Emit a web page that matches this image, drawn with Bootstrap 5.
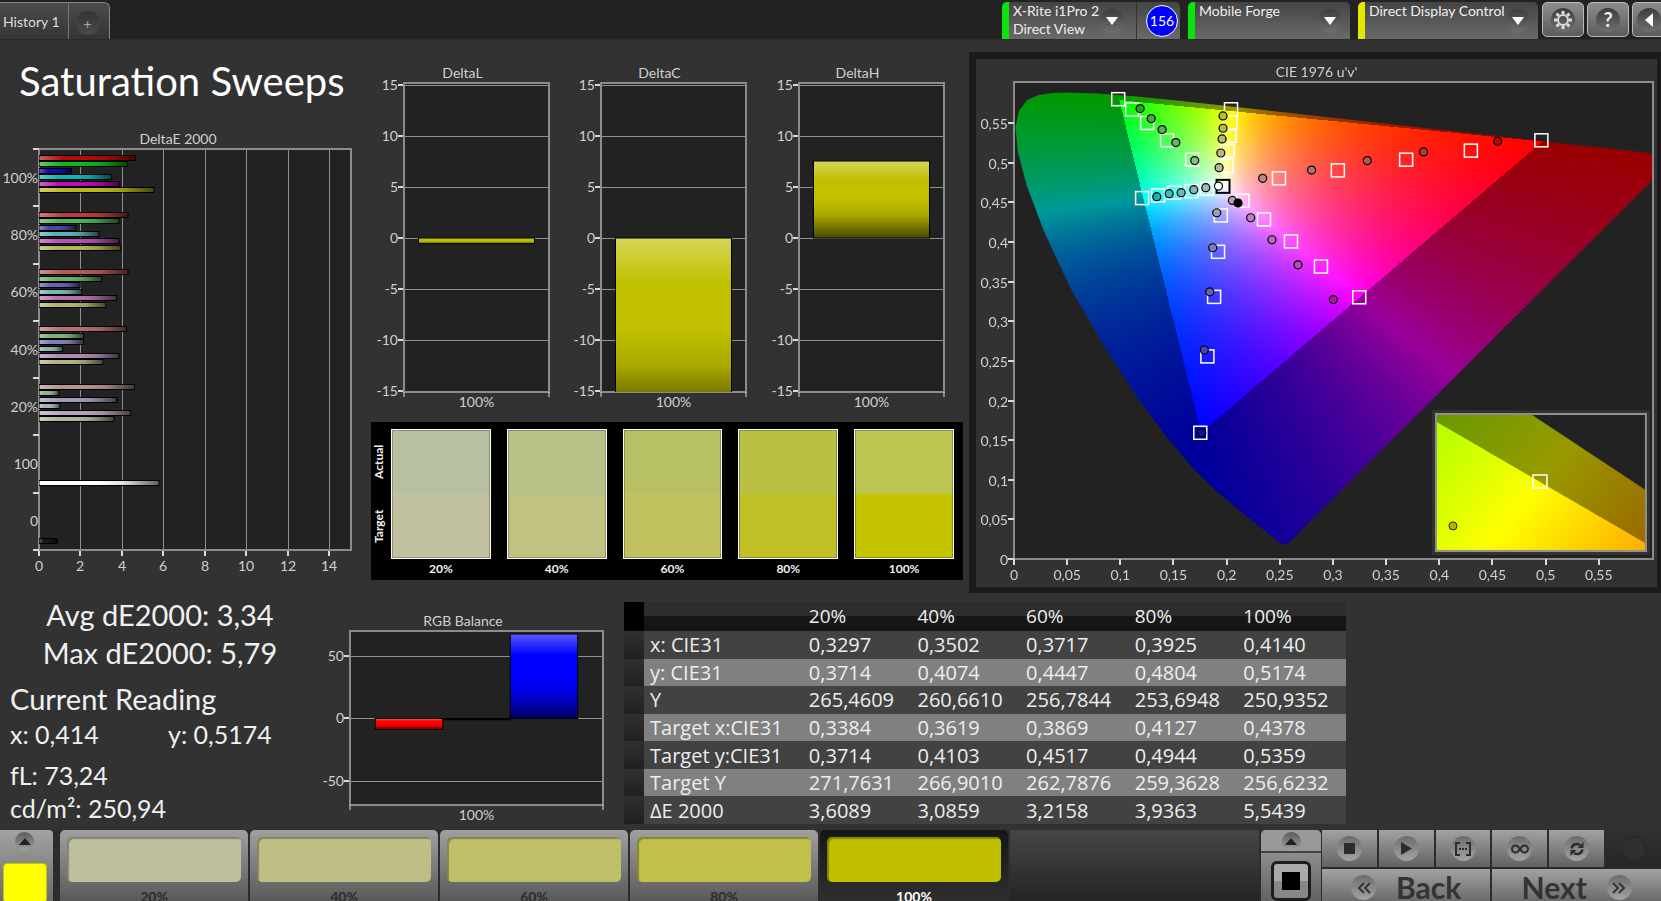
<!DOCTYPE html>
<html lang="en" data-bs-theme="dark">
<head>
<meta charset="utf-8">
<meta name="viewport" content="width=device-width, initial-scale=1">
<title>Saturation Sweeps</title>
<link rel="stylesheet" href="https://cdn.jsdelivr.net/npm/bootstrap@5.3.0/dist/css/bootstrap.min.css">
<style>
  body { background: #323232; color: #f0f0f0; font-family: Lato, "Open Sans", sans-serif; font-size: 14px; line-height: 19px; }
  button { font: inherit; color: inherit; border: 0; padding: 0; }
  svg { display: block; }

  /* top bar */
  .topbar { background: #222; height: 40px; border-bottom: 1px solid #2a2a2a; padding-top: 2px; }
  .history-tab { height: 37px; background: linear-gradient(#4c4c4c, #343434); border: 1px solid #858585; border-width: 1px 1px 0 0; border-radius: 0 6px 0 0; color: #ddd; }
  .history-tab .tab-name { background: none; padding: 0 8px 0 3px; border-right: 1px solid #777; }
  .history-tab .tab-add { width: 24px; height: 24px; margin: 8px 9px 0 7px; border-radius: 50%; background: linear-gradient(#333, #4a4a4a); color: #aaa; }
  .device { height: 37px; background: linear-gradient(#444, #6a6a6a); border-radius: 5px 5px 0 0; border-left: 7px solid #0be40b; overflow: hidden; }
  .device.standby { border-left-color: #e6e600; }
  .device .device-text { padding-left: 4px; white-space: nowrap; line-height: 18px; }
  .knob { width: 24px; height: 24px; border-radius: 50%; background: linear-gradient(#3c3c3c, #707070); display: flex; align-items: center; justify-content: center; flex: none; }
  .device .knob { margin: 7px 8px 0 0; }
  .meter-knob { border-right: 1px solid #333; }
  .meter-knob .knob { margin-right: 12px; }
  .meter-count { width: 32px; height: 32px; margin: 3px 2px 0 9px; border-radius: 50%; background: #00f; border: 1px solid #fff; color: #fff; line-height: 30px; text-align: center; flex: none; }
  .tool { width: 42px; height: 35px; border: 1px solid #bbb; border-radius: 5px; background: linear-gradient(#8c8c8c, #5c5c5c); display: flex; align-items: center; justify-content: center; flex: none; }
  .tool.cut { border-right: 0; border-radius: 5px 0 0 5px; width: 29px; padding-left: 4px; }

  /* work area */
  .upper { display: grid; grid-template-columns: 364fr 605fr 692fr; flex: 556 1 0; min-height: 0; }
  .lower { display: grid; grid-template-columns: 310fr 314fr 722fr 315fr; flex: 234 1 0; min-height: 0; }
  .upper > *, .lower > * { min-width: 0; min-height: 0; }
  .plot { flex: 1 1 0; min-width: 0; min-height: 0; position: relative; }
  .plot svg { width: 100%; height: 100%; position: absolute; left: 0; top: 0; }
  .plot canvas { position: absolute; }
  .plot text { fill: #d0d0d0; font-size: 14px; }
  .delta-row { padding-right: 13px; }
  .sweep-title { font-size: 40px; line-height: 48px; font-weight: 400; padding: 17px 0 22px 19px; margin: 0; white-space: nowrap; }
  .cie-frame { border: 7px solid #1b1b1b; border-right-width: 4px; border-bottom-width: 6px; margin: 12px 0 3px; }
  .cie-inset { position: absolute; right: 7px; bottom: 32px; width: 32%; border: 3px solid #323232; }
  .plot .cie-inset svg { position: static; height: auto; }

  .swatches { background: #000; height: 158px; margin: 0 6px 16px 7px; padding: 7px 9px 0 0; }
  .swatches .side { width: 20px; font-size: 12px; font-weight: 700; line-height: 16px; height: 130px; }
  .swatches .side span { writing-mode: vertical-rl; transform: rotate(180deg); text-align: center; flex: 1; }
  .patch { height: 130px; border: 1px solid #fff; outline: 1px solid rgba(0,0,0,.25); outline-offset: -2px; }
  .patch-name { font-size: 12px; font-weight: 700; line-height: 20px; text-align: center; }

  .big-read { font-size: 29px; line-height: 38px; }
  .mid-read { font-size: 25px; line-height: 33px; }
  .stats { padding-left: 10px; white-space: nowrap; }

  .readings { font-family: "Open Sans", "Noto Sans", sans-serif; font-size: 20px; line-height: 27px; width: 100%; height: 222px; table-layout: fixed; border-collapse: collapse; margin-top: 6px; white-space: nowrap; color: #eee; }
  .readings th, .readings td { padding: 0 0 0 6px; font-weight: 400; }
  .readings thead th { background: linear-gradient(#2d2d2d 48%, #161616 50%); font-weight: 500; font-size: 19px; height: 29px; }
  .readings tbody tr { background: #424242; }
  .readings tbody tr:nth-child(even) { background: #808080; }
  .readings .grip { background: linear-gradient(#303030, #202020); }
  .readings thead .grip { background: #000; }

  /* bottom bar */
  .dock { height: 71px; background: #2c2c2c; flex: none; overflow: hidden; }
  .metal { background: linear-gradient(#a2a2a2, #626262); }
  .dock .mini { width: 19px; height: 19px; border-radius: 50%; background: linear-gradient(#5c5c5c, #a0a0a0); display: flex; align-items: center; justify-content: center; }
  .picker { width: 53px; height: 84px; border-radius: 0 4px 0 0; margin-right: 7px; padding: 2px 4px 0 0; }
  .picker .tint { width: 44px; height: 40px; margin-top: 12px; border-radius: 4px; background: #ff0; border: 1px solid #c4c400; }
  .level { width: 188px; height: 75px; border-radius: 5px 5px 0 0; margin-right: 2px; padding: 7px 7px 0; color: #2c2c2c; font-weight: 700; line-height: 17px; flex: 0 1 auto; background: linear-gradient(#a0a0a0, #555); }
  .level .tint { display: block; height: 45px; border-radius: 5px; margin-bottom: 6px; box-shadow: inset 2px 2px 1px rgba(0,0,0,.3); }
  .level.chosen { background: linear-gradient(#161616, #303030); color: #fff; }
  .shelf { background: linear-gradient(#464646, #242424); }
  .window-col { width: 60px; border-radius: 5px 5px 0 0; margin: 0 1px 0 2px; overflow: hidden; }
  .window-col .up { height: 23px; border-bottom: 2px solid #444; background: #999; }
  .window-col .target-window { width: 40px; height: 40px; margin-top: 8px; border: 3px solid #1c1c1c; border-radius: 6px; background: linear-gradient(#aaa 50%, #888 50%); display: flex; align-items: center; justify-content: center; }
  .transport { width: 339px; display: grid; grid-template-columns: repeat(6, 1fr); gap: 2px; grid-template-rows: 37px 37px; }
  .transport button { display: flex; align-items: center; justify-content: center; }
  .transport .knob { background: linear-gradient(#6c6c6c, #a4a4a4); width: 25px; height: 25px; }
  .transport .idle { background: linear-gradient(#303030, #262626); }
  .transport .idle .knob { background: #2f2f2f; border: 1px solid #262626; }
  .transport .wide { grid-column: span 3; font-size: 30px; font-weight: 700; color: #333; gap: 20px; }
</style>
</head>
<body class="vh-100 overflow-hidden d-flex flex-column">

<header class="topbar d-flex justify-content-between flex-shrink-0">
  <div class="history-tab d-flex">
    <button class="tab-name">History 1</button>
    <button class="tab-add" aria-label="Add history">+</button>
  </div>
  <div class="d-flex">
    <div class="device d-flex me-2" style="width:178px">
      <div class="device-text flex-grow-1">X-Rite i1Pro 2<br>Direct View</div>
      <div class="meter-knob"><button class="knob" aria-label="Meter menu"><svg width="12" height="8"><path d="M0 0h12L6 8z" fill="#fff"/></svg></button></div>
      <div class="meter-count">156</div>
    </div>
    <div class="device d-flex me-2" style="width:162px">
      <div class="device-text flex-grow-1">Mobile Forge</div>
      <button class="knob" aria-label="Source menu"><svg width="12" height="8"><path d="M0 0h12L6 8z" fill="#fff"/></svg></button>
    </div>
    <div class="device standby d-flex me-1" style="width:180px">
      <div class="device-text flex-grow-1">Direct Display Control</div>
      <button class="knob" aria-label="Display menu"><svg width="12" height="8"><path d="M0 0h12L6 8z" fill="#fff"/></svg></button>
    </div>
    <div class="d-flex" style="gap:3px">
      <button class="tool" aria-label="Settings"><span class="knob"><svg width="20" height="20" viewBox="-10 -10 20 20" fill="none" stroke="#ddd"><circle r="5" stroke-width="2"/><g stroke-width="3"><path d="M0-6v-3M0 6v3M6 0h3M-6 0h-3M4.200-4.200l2.200-2.200M-4.200 4.200l-2.200 2.200M4.200 4.200l2.200 2.200M-4.200-4.200l-2.200-2.200"/></g></svg></span></button>
      <button class="tool" aria-label="Help"><span class="knob fw-bold" style="font-size:20px">?</span></button>
      <button class="tool cut" aria-label="Collapse"><span class="knob"><svg width="8" height="14"><path d="M8 0v14L0 7z" fill="#fff"/></svg></span></button>
    </div>
  </div>
</header>

<main class="d-flex flex-column flex-grow-1" style="min-height:0">
  <section class="upper">
    <div class="d-flex flex-column">
      <h1 class="sweep-title">Saturation Sweeps</h1>
      <div class="plot me-2" id="deltaE"></div>
    </div>
    <div class="d-flex flex-column">
      <div class="delta-row d-flex flex-grow-1">
        <div class="plot" id="deltaL"></div>
        <div class="plot" id="deltaC"></div>
        <div class="plot" id="deltaH"></div>
      </div>
      <div class="swatches d-flex">
        <div class="side d-flex flex-column"><span>Actual</span><span>Target</span></div>
        <div class="d-flex flex-grow-1 gap-3" id="patches"></div>
      </div>
    </div>
    <div class="cie-frame d-flex"><div class="plot" id="cie">
      <canvas></canvas>
      <div class="cie-inset">
        <svg viewBox="0 0 212 139">
          <defs>
            <linearGradient id="nearYellow" gradientUnits="userSpaceOnUse" x1="10" y1="-6" x2="200" y2="144">
              <stop offset="0" stop-color="#b0ff00"/><stop offset=".5" stop-color="#ff0"/><stop offset="1" stop-color="#ffb000"/>
            </linearGradient>
          </defs>
          <rect width="212" height="139" fill="#222"/>
          <path d="M0 0H94L212 78V139H0z" fill="url(#nearYellow)"/>
          <path d="M0 0H94L212 78V131L0 8z" fill="#000" opacity=".4"/>
          <rect x="98" y="62" width="14" height="13" fill="none" stroke="#fff" stroke-width="1.500"/>
          <circle cx="18" cy="113" r="4" fill="#b4b400" stroke="#222"/>
          <rect x="1" y="1" width="210" height="137" fill="none" stroke="#909090" stroke-width="2"/>
        </svg>
      </div>
    </div></div>
  </section>

  <section class="lower">
    <div class="stats">
      <div class="text-center">
        <div class="big-read">Avg dE2000: 3,34</div>
        <div class="big-read">Max dE2000: 5,79</div>
      </div>
      <div class="big-read pt-2">Current Reading</div>
      <div class="mid-read d-flex"><span class="w-50">x: 0,414</span><span class="ps-2">y: 0,5174</span></div>
      <div class="mid-read pt-2">fL: 73,24</div>
      <div class="mid-read">cd/m²: 250,94</div>
    </div>
    <div class="d-flex pb-1"><div class="plot me-2" id="rgb"></div></div>
    <div><table class="readings">
      <colgroup><col style="width:20px"><col style="width:22%"><col><col><col><col><col></colgroup>
      <thead><tr><th class="grip"></th><th></th><th>20%</th><th>40%</th><th>60%</th><th>80%</th><th>100%</th></tr></thead>
      <tbody>
        <tr><td class="grip"></td><th>x: CIE31</th><td>0,3297</td><td>0,3502</td><td>0,3717</td><td>0,3925</td><td>0,4140</td></tr>
        <tr><td class="grip"></td><th>y: CIE31</th><td>0,3714</td><td>0,4074</td><td>0,4447</td><td>0,4804</td><td>0,5174</td></tr>
        <tr><td class="grip"></td><th>Y</th><td>265,4609</td><td>260,6610</td><td>256,7844</td><td>253,6948</td><td>250,9352</td></tr>
        <tr><td class="grip"></td><th>Target x:CIE31</th><td>0,3384</td><td>0,3619</td><td>0,3869</td><td>0,4127</td><td>0,4378</td></tr>
        <tr><td class="grip"></td><th>Target y:CIE31</th><td>0,3714</td><td>0,4103</td><td>0,4517</td><td>0,4944</td><td>0,5359</td></tr>
        <tr><td class="grip"></td><th>Target Y</th><td>271,7631</td><td>266,9010</td><td>262,7876</td><td>259,3628</td><td>256,6232</td></tr>
        <tr><td class="grip"></td><th>ΔE 2000</th><td>3,6089</td><td>3,0859</td><td>3,2158</td><td>3,9363</td><td>5,5439</td></tr>
      </tbody>
    </table></div>
  </section>
</main>

<footer class="dock d-flex">
  <div class="picker metal d-flex flex-column align-items-center flex-shrink-0">
    <button class="mini" aria-label="Expand colors"><svg width="12" height="7"><path d="M0 7h12L6 0z" fill="#222"/></svg></button>
    <button class="tint" aria-label="Yellow"></button>
  </div>
  <button class="level"><span class="tint" style="background:#bebf9f"></span>20%</button>
  <button class="level"><span class="tint" style="background:#bfbf85"></span>40%</button>
  <button class="level"><span class="tint" style="background:#bfbf6a"></span>60%</button>
  <button class="level"><span class="tint" style="background:#c0c04a"></span>80%</button>
  <button class="level chosen"><span class="tint" style="background:#bfbf00"></span>100%</button>
  <div class="shelf flex-grow-1"></div>
  <div class="window-col metal d-flex flex-column align-items-center flex-shrink-0">
    <div class="up w-100 d-flex justify-content-center"><button class="mini" style="margin-top:2px" aria-label="Expand windows"><svg width="12" height="7"><path d="M0 7h12L6 0z" fill="#222"/></svg></button></div>
    <button class="target-window" aria-label="Pattern window"><svg width="18" height="18"><path d="M0 0h18v18H0z" fill="#000"/></svg></button>
  </div>
  <div class="transport flex-shrink-0">
    <button class="metal" aria-label="Stop"><span class="knob"><svg width="11" height="11"><path d="M0 0h11v11H0z" fill="#2c2c2c"/></svg></span></button>
    <button class="metal" aria-label="Play"><span class="knob"><svg width="12" height="13"><path d="M1 0l11 6.500L1 13z" fill="#2c2c2c"/></svg></span></button>
    <button class="metal" aria-label="Range"><span class="knob"><svg width="16" height="14" fill="none" stroke="#2c2c2c" stroke-width="2"><path d="M5 1H1v12h4M11 1h4v12h-4"/><path d="M4 7h2M7 7h2M10 7h2"/></svg></span></button>
    <button class="metal" aria-label="Continuous"><span class="knob"><svg width="18" height="10" viewBox="0 0 18 10" fill="none" stroke="#2c2c2c" stroke-width="2"><path d="M9 5C7 2 6 1.500 4.500 1.500a3.500 3.500 0 0 0 0 7C6 8.500 7 8 9 5s3-3.500 4.500-3.500a3.500 3.500 0 0 1 0 7C12 8.500 11 8 9 5z"/></svg></span></button>
    <button class="metal" aria-label="Repeat"><span class="knob"><svg width="16" height="16" viewBox="0 0 16 16" fill="none" stroke="#2c2c2c" stroke-width="2.500"><path d="M2.500 7.500C3 4 7 1.500 11 4M13.500 8.500C13 12 9 14.500 5 12"/><path d="M14.500 1v6h-6zM1.500 15V9h6z" fill="#2c2c2c" stroke="none"/></svg></span></button>
    <button class="idle" aria-label="Record"><span class="knob"></span></button>
    <button class="metal wide"><span class="knob"><svg width="14" height="12" fill="none" stroke="#333" stroke-width="2"><path d="M7 1L2 6l5 5M13 1L8 6l5 5"/></svg></span>Back</button>
    <button class="metal wide">Next<span class="knob"><svg width="14" height="12" fill="none" stroke="#333" stroke-width="2"><path d="M1 1l5 5-5 5M7 1l5 5-5 5"/></svg></span></button>
  </div>
</footer>

<script src="https://cdn.jsdelivr.net/npm/bootstrap@5.3.0/dist/js/bootstrap.bundle.min.js"></script>
<script>
const NS = 'http://www.w3.org/2000/svg';
const el = (parent, tag, attrs, text) => {
  const n = document.createElementNS(NS, tag);
  for (const k in attrs) n.setAttribute(k, attrs[k]);
  if (text !== undefined) n.textContent = text;
  parent.appendChild(n);
  return n;
};
const comma = n => String(+n.toFixed(2)).replace('.', ',');

/* Opens an SVG in the host and returns its plot area: frame inside the margins. */
function openPlot(id, title, m) {
  const host = document.getElementById(id);
  host.querySelector(':scope > svg')?.remove();
  const w = host.clientWidth, h = host.clientHeight;
  const svg = document.createElementNS(NS, 'svg');
  host.insertBefore(svg, host.querySelector('.cie-inset'));
  const box = { x: m.l, y: m.t, w: w - m.l - m.r, h: h - m.t - m.b };
  const defs = el(svg, 'defs', {});
  for (const [name, x2, y2] of [['shadeX', 1, 0], ['shadeY', 0, 1]]) {
    const g = el(defs, 'linearGradient', { id: id + name, x1: 0, y1: 0, x2, y2 });
    el(g, 'stop', { offset: 0, 'stop-color': '#fff', 'stop-opacity': .35 });
    el(g, 'stop', { offset: .25, 'stop-color': '#fff', 'stop-opacity': 0 });
    el(g, 'stop', { offset: .5, 'stop-color': '#000', 'stop-opacity': 0 });
    el(g, 'stop', { offset: .7, 'stop-color': '#000', 'stop-opacity': .12 });
    el(g, 'stop', { offset: 1, 'stop-color': '#000', 'stop-opacity': .62 });
  }
  const clip = el(defs, 'clipPath', { id: id + 'clip' });
  el(clip, 'rect', { x: box.x, y: box.y, width: box.w, height: box.h });
  if (id !== 'cie') el(svg, 'rect', { x: box.x, y: box.y, width: box.w, height: box.h, fill: '#222' });
  el(svg, 'text', { x: w / 2, y: m.t - 5, 'text-anchor': 'middle' }, title);
  return { svg, box, id };
}
const line = (p, x1, y1, x2, y2, c, sw) => el(p.svg, 'line', { x1, y1, x2, y2, stroke: c, 'stroke-width': sw || 1 });
const label = (p, x, y, s, anchor) => el(p.svg, 'text', { x, y: y + 5, 'text-anchor': anchor }, s);
const frame = p => el(p.svg, 'rect', { x: p.box.x, y: p.box.y, width: p.box.w, height: p.box.h, fill: 'none', stroke: '#8c8c8c', 'stroke-width': 2 });
function bar(p, x, y, w, h, color, shade) {
  const g = el(p.svg, 'g', { 'clip-path': `url(#${p.id}clip)` });
  el(g, 'rect', { x, y, width: w, height: h, fill: color });
  el(g, 'rect', { x, y, width: w, height: h, fill: `url(#${p.id}${shade})`, stroke: '#000', 'stroke-width': 1 });
}

function drawDeltaE() {
  const p = openPlot('deltaE', 'DeltaE 2000', { l: 39, r: 5, t: 22, b: 46 }), b = p.box;
  const groups = [
    ['100%', [4.66, 4.27, 1.57, 3.5, 3.89, 5.54], ['#bb0808', '#10b810', '#1010a8', '#10b4b4', '#b810b8', '#b8b818']],
    ['80%', [4.29, 3.86, 1.78, 2.89, 3.86, 3.94], ['#bb3c3c', '#48b848', '#4848a8', '#58b4b4', '#b850b8', '#b4b450']],
    ['60%', [4.29, 3.02, 1.98, 2.06, 3.74, 3.22], ['#b85858', '#68b068', '#6464b4', '#78b4b4', '#b470b4', '#b4b470']],
    ['40%', [4.22, 2.15, 2.15, 1.14, 3.86, 3.09], ['#b47070', '#78b478', '#8080b8', '#90b4b4', '#b488b4', '#b4b480']],
    ['20%', [4.61, .95, 3.74, 1.01, 4.42, 3.61], ['#b89090', '#90b490', '#a09cbc', '#a4b4b8', '#b8a4b8', '#b4b498']],
    ['100', [, , , , , , 5.78], [, , , , , , '#fff']],
    ['0', [, , , , , , .87], [, , , , , , '#181818']]
  ];
  const unit = b.w / 15.04, gh = b.h / 7;
  for (let v = 0; v < 15; v += 2) {
    const x = Math.round(b.x + v * unit);
    line(p, x + .5, b.y, x + .5, b.y + b.h, '#909090', 1);
    line(p, x, b.y + b.h, x, b.y + b.h + 6, '#d8d8d8', 2);
    label(p, x, b.y + b.h + 16, v, 'middle');
  }
  frame(p);
  for (let i = 0; i < 8; i++) line(p, b.x - 6, Math.round(b.y + i * gh), b.x, Math.round(b.y + i * gh), '#d8d8d8', 2);
  groups.forEach(([name, vals, cols], i) => {
    label(p, b.x - 1, b.y + (i + .5) * gh, name, 'end');
    vals.forEach((v, k) => bar(p, b.x, Math.round(b.y + i * gh + 5.5 + k * 6.55) + .5, v * unit, 5, cols[k], 'shadeX'));
  });
}

function drawColumns(id, title, m, min, max, step, cols) {
  const p = openPlot(id, title, m), b = p.box, Y = v => b.y + (max - v) / (max - min) * b.h;
  for (let v = Math.ceil(min / step) * step; v <= max; v += step) {
    const y = Math.round(Y(v));
    line(p, b.x, y + .5, b.x + b.w, y + .5, '#909090', 1);
    line(p, b.x - 6, y, b.x, y, '#d8d8d8', 2);
    label(p, b.x - 6, y, v, 'end');
  }
  frame(p);
  line(p, b.x, b.y + b.h, b.x, b.y + b.h + 5, '#d8d8d8');
  line(p, b.x + b.w, b.y + b.h, b.x + b.w, b.y + b.h + 5, '#d8d8d8');
  const w = b.w * .8 / cols.length;
  cols.forEach(([v, color], i) => {
    const x = b.x + b.w * .1 + i * w, top = Y(Math.max(v, 0)), bot = Y(Math.min(v, 0));
    bar(p, x, top, w, Math.max(bot - top, 1), color, 'shadeY');
  });
  label(p, b.x + b.w / 2, b.y + b.h + 10, '100%', 'middle');
}

/* Spectral locus in CIE 1931 xy, from violet round to red. */
const LOCUS = [[.1741,.005],[.1733,.0048],[.1714,.0051],[.1689,.0069],[.1644,.0109],[.1566,.0177],[.144,.0297],[.1355,.0399],[.1241,.0578],[.1096,.0868],[.0913,.1327],[.0687,.2007],[.0454,.295],[.0235,.4127],[.0082,.5384],[.0039,.6548],[.0139,.7502],[.0389,.812],[.0743,.8338],[.1142,.8262],[.1547,.8059],[.2296,.7543],[.3016,.6923],[.3731,.6245],[.4441,.5547],[.5125,.4866],[.5752,.4242],[.627,.3725],[.6915,.3083],[.719,.2809],[.7347,.2653]];
const TARGETS = [[.098,.5803],[.1111,.5673],[.1252,.5503],[.144,.5284],[.1675,.504],[.2041,.5676],[.2036,.5508],[.2026,.5339],[.2008,.5149],[.1998,.496],[.1205,.4555],[.1356,.4589],[.1506,.4623],[.1669,.4643],[.1816,.4674],[.2148,.4522],[.2351,.4286],[.2605,.4008],[.2887,.3691],[.3247,.3303],[.1945,.4336],[.1919,.3877],[.1882,.3308],[.1819,.2557],[.1752,.1593],[.2492,.4804],[.3046,.4905],[.3688,.504],[.4297,.5154],[.496,.5284]];
const MEASURED = [[.1186,.5685,'#10b010'],[.129,.5559,'#40b040'],[.1393,.542,'#58b058'],[.1522,.5255,'#70b070'],[.17,.5028,'#90b890'],[.1966,.5592,'#c0c010'],[.1966,.5436,'#b8b848'],[.1957,.5301,'#b8b860'],[.1945,.5124,'#b8b880'],[.1929,.4939,'#b8b898'],[.1343,.4573,'#10b4b4'],[.1459,.4611,'#50b4b4'],[.1572,.4623,'#70b4b4'],[.1691,.4661,'#88b4b4'],[.1804,.4686,'#a0b8b8'],[.2054,.4526,'#b4a0b4'],[.2226,.4307,'#b488b4'],[.2426,.4029,'#b470b4'],[.2671,.3713,'#b450b4'],[.3003,.3274,'#b010b0'],[.1907,.437,'#a0a0b8'],[.1869,.3928,'#8080b4'],[.1841,.3372,'#6464b4'],[.179,.2638,'#4444b0'],[.1766,.1593,'#1010a0'],[.2339,.4804,'#b88c8c'],[.2799,.4909,'#b47070'],[.3323,.5028,'#b05858'],[.3852,.5137,'#b03838'],[.4549,.5272,'#b00808'],[.1923,.4707,'#fff'],[.2107,.4492,'#000']];

function drawCie() {
  const p = openPlot('cie', "CIE 1976 u'v'", { l: 38, r: 4, t: 23, b: 28 }), b = p.box;
  const U = .601, V = .602, X = u => b.x + u / U * b.w, Y = v => b.y + b.h - v / V * b.h;
  const cv = document.querySelector('#cie canvas'), W = cv.width = Math.round(b.w), H = cv.height = Math.round(b.h);
  cv.style.left = b.x + 'px'; cv.style.top = b.y + 'px';
  const g = cv.getContext('2d'), img = g.createImageData(W, H);
  for (let j = 0; j < H; j++) for (let i = 0; i < W; i++) {
    const u = i / W * U, v = (H - j) / H * V - .002, o = (j * W + i) * 4;
    if (v <= 0) continue;
    const x = 9 * u / (4 * v), z = (12 - 3 * u - 20 * v) / (4 * v);
    const lin = [2.4935 * x - .9314 - .4027 * z, -.8295 * x + 1.7627 + .0236 * z, .0358 * x - .0762 + .9569 * z];
    const dim = Math.min(...lin) < -.0005 ? .6 : 1, top = Math.max(...lin);
    lin.forEach((c, k) => img.data[o + k] = 255 * dim * Math.max(c, 0) / top);
    img.data[o + 3] = 255;
  }
  g.putImageData(img, 0, 0);
  /* keep the colours only inside the locus */
  g.globalCompositeOperation = 'destination-in';
  g.beginPath();
  LOCUS.forEach(([x, y]) => {
    const d = -2 * x + 12 * y + 3;
    g.lineTo(4 * x / d / U * W, H - (9 * y / d + .002) / V * H);
  });
  g.closePath(); g.fill();
  g.globalCompositeOperation = 'destination-over';
  g.fillStyle = '#222'; g.fillRect(0, 0, W, H);

  frame(p);
  for (let k = 0; k < 12; k++) {
    const t = k * .05;
    line(p, Math.round(X(t)), b.y + b.h, Math.round(X(t)), b.y + b.h + 6, '#d8d8d8', 2);
    line(p, b.x - 6, Math.round(Y(t)), b.x, Math.round(Y(t)), '#d8d8d8', 2);
    label(p, X(t), b.y + b.h + 16, comma(t), 'middle');
    label(p, b.x - 6, Y(t) + 1, comma(t), 'end');
  }
  const square = (u, v, c, sw) => el(p.svg, 'rect', { x: X(u) - 6.5, y: Y(v) - 6.5, width: 13, height: 13, fill: 'none', stroke: c, 'stroke-width': sw });
  TARGETS.forEach(([u, v]) => square(u, v, '#fff', 1.5));
  square(.1966, .4703, '#000', 2);
  MEASURED.forEach(([u, v, c]) => el(p.svg, 'circle', { cx: X(u), cy: Y(v), r: 4, fill: c, stroke: '#000', 'stroke-width': 1.2 }));
}

function drawAll() {
  drawDeltaE();
  const m = { l: 40, r: 12, t: 43, b: 30 };
  drawColumns('deltaL', 'DeltaL', m, -15.1, 15.2, 5, [[-.55, '#c0c000']]);
  drawColumns('deltaC', 'DeltaC', m, -15.1, 15.2, 5, [[-17.8, '#c0c000']]);
  drawColumns('deltaH', 'DeltaH', m, -15.1, 15.2, 5, [[7.55, '#c0c000']]);
  drawColumns('rgb', 'RGB Balance', { l: 40, r: 13, t: 35, b: 21 }, -69.6, 70.4, 50, [[-8.8, '#f00'], [-1, '#000'], [68, '#00f']]);
  drawCie();
}

document.getElementById('patches').innerHTML = [
  ['20%', '#b7c1a2', '#c1c1a0'], ['40%', '#b8c186', '#c1c182'], ['60%', '#b8c066', '#c1c160'], ['80%', '#b9c044', '#c1c028'], ['100%', '#bcc552', '#c4c400']
].map(([n, a, t]) => `<div style="flex:1"><div class="patch" style="background:linear-gradient(${a} 50%,${t} 50%)"></div><div class="patch-name">${n}</div></div>`).join('');
drawAll();
addEventListener('resize', drawAll);
</script>
</body>
</html>
